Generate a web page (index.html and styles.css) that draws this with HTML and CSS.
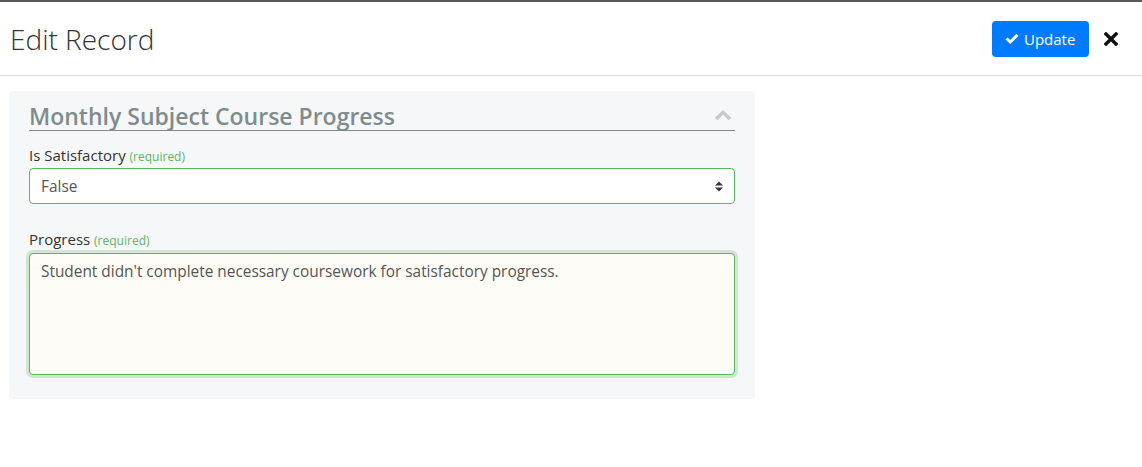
FILE: index.html
```html
<!DOCTYPE html>
<html lang="en">
  <head>
    <meta charset="UTF-8" />
    <meta name="viewport" content="width=device-width, initial-scale=1.0" />
    <title>Edit Record</title>
    <link rel="stylesheet" href="styles.css">
  </head>
  <body>
    <div class="topbar"></div>
    <header class="modal-header">
      <h1>Edit Record</h1>
      <div class="actions">
        <button class="button" type="button">
          <svg class="check" width="14" height="11" viewBox="0 0 14 11">
            <path d="M1.5 5.5 L5.2 9 L12.5 1.8" fill="none" stroke="#fff" stroke-width="3" />
          </svg>
          Update
        </button>
        <svg class="close" width="14" height="14" viewBox="0 0 14 14">
          <path d="M2 2 L12 12 M12 2 L2 12" stroke="#111" stroke-width="3.4" stroke-linecap="square" />
        </svg>
      </div>
    </header>

    <div class="modal-body">
      <section class="panel">
        <div class="panel-title">
          <h2>Monthly Subject Course Progress</h2>
          <svg class="chevron" width="18" height="11" viewBox="0 0 18 11">
            <path d="M2 9 L9 2.5 L16 9" fill="none" stroke="#c3cbcb" stroke-width="3.6" />
          </svg>
        </div>

        <label class="field-label">Is Satisfactory <span class="req">(required)</span></label>
        <div class="select-wrap">
          <select class="field">
            <option>False</option>
            <option>True</option>
          </select>
          <svg class="caret" width="8" height="11" viewBox="0 0 8 11">
            <path d="M0 4.5 L4 0.5 L8 4.5 Z M0 6.5 L4 10.5 L8 6.5 Z" fill="#333" />
          </svg>
        </div>

        <label class="field-label progress-label">Progress <span class="req">(required)</span></label>
        <textarea class="field text">Student didn't complete necessary coursework for satisfactory progress.</textarea>
      </section>
    </div>
  </body>
</html>
```

FILE: styles.css
```css
body {
  font-family: "Open Sans", Arial, sans-serif;
  margin: 0;
  padding: 0;
  background: #fff;
  color: #333;
}

.topbar {
  height: 2px;
  background: #5a5a5a;
}

.modal-header {
  display: flex;
  align-items: center;
  justify-content: space-between;
  height: 73px;
  padding: 0 24px 0 10px;
  border-bottom: 1px solid #e3e3e3;
}
.modal-header h1 {
  margin: 0;
  font-size: 28px;
  font-weight: 300;
  color: #333;
}
.actions {
  display: flex;
  align-items: center;
  gap: 15px;
}
.button {
  display: flex;
  align-items: center;
  gap: 5px;
  height: 36px;
  width: 97px;
  padding: 0 0 0 13px;
  background: #007bff;
  color: white;
  border: none;
  border-radius: 4px;
  font-family: inherit;
  font-size: 15px;
}
.close {
  margin-top: 1px;
}

.modal-body {
  padding: 15px 9px;
}
.panel {
  width: 706px;
  padding: 12px 20px 24px;
  background: #f6f7f9;
  border-radius: 4px;
}
.panel-title {
  display: flex;
  align-items: center;
  justify-content: space-between;
  padding: 0 3px 1px 0;
  border-bottom: 1px solid #7f8c8d;
}
.panel-title h2 {
  margin: 0;
  font-size: 23px;
  line-height: 26px;
  font-weight: 600;
  color: #7f8c8d;
}
.chevron {
  margin-top: -2px;
}

.field-label {
  display: block;
  margin: 14px 0 1px;
  font-size: 15px;
  line-height: 20px;
  color: #333;
}
.progress-label {
  margin-top: 25px;
  margin-bottom: 2px;
}
.req {
  font-size: 12px;
  color: #5cb85c;
}

.select-wrap {
  position: relative;
}
.field {
  display: block;
  box-sizing: border-box;
  width: 100%;
  border: 1px solid #5cb85c;
  border-radius: 4px;
  font-family: inherit;
  font-size: 15.4px;
  color: #555;
}
select.field {
  appearance: none;
  height: 36px;
  padding: 0 11px;
  background: #fff;
}
.caret {
  position: absolute;
  right: 12px;
  top: 13px;
}
textarea.field {
  height: 122px;
  padding: 8px 11px 6px;
  line-height: 20px;
  resize: none;
  background: #fdfcf7;
  box-shadow: 0 0 0 3px rgba(92, 184, 92, 0.25);
  outline: none;
}
```
